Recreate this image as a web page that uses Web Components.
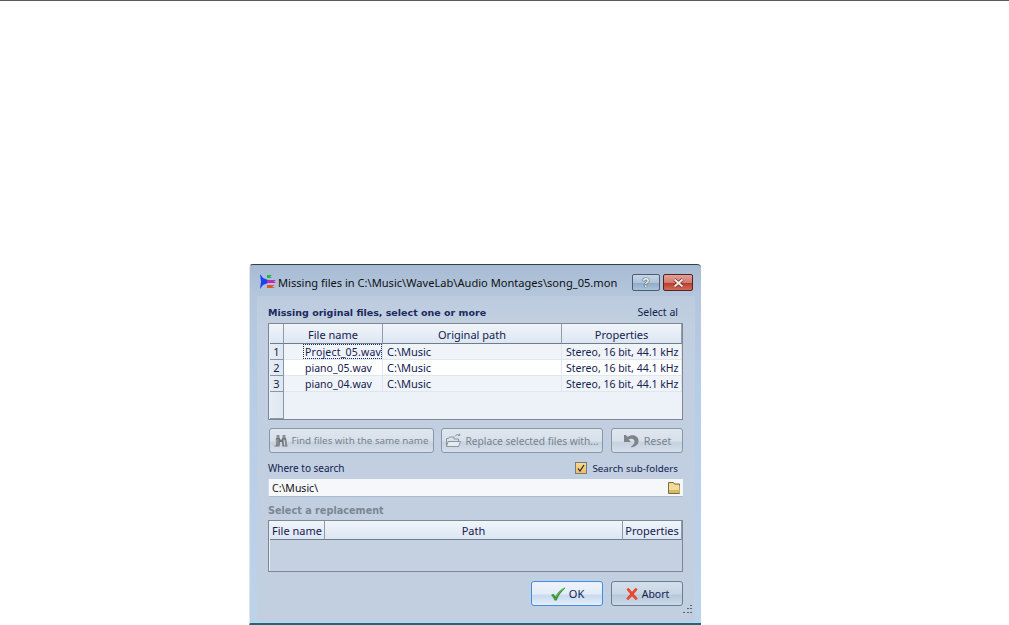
<!DOCTYPE html>
<html>
<head>
<meta charset="utf-8">
<style>
  html, body { margin: 0; background: #fff; }
  body { border-top: 1px solid #5a5a5a; font-family: "Noto Sans", "DejaVu Sans", sans-serif; height: 624px; overflow: hidden; }
</style>
</head>
<body>

<wl-dialog>
  <span slot="title">Missing files in C:\Music\WaveLab\Audio Montages\song_05.mon</span>

  <wl-section-head style="padding-top:2px">
    <wl-heading>Missing original files, select one or more</wl-heading>
    <wl-label slot="end">Select al</wl-label>
  </wl-section-head>

  <wl-grid cols="14px 99px 179px 120px" rows="20px 16px 16px 16px 1fr" style="height:95px">
    <wl-cell kind="head"></wl-cell><wl-cell kind="head" align="center">File name</wl-cell><wl-cell kind="head" align="center">Original path</wl-cell><wl-cell kind="head" align="center">Properties</wl-cell>
    <wl-cell kind="gutter">1</wl-cell><wl-cell focus indent style="font-size:10.5px;letter-spacing:.2px">Project_05.wav</wl-cell><wl-cell>C:\Music</wl-cell><wl-cell style="font-size:10.5px">Stereo, 16 bit, 44.1 kHz</wl-cell>
    <wl-cell kind="gutter">2</wl-cell><wl-cell kind="alt" indent style="font-size:10.5px">piano_05.wav</wl-cell><wl-cell kind="alt">C:\Music</wl-cell><wl-cell kind="alt" style="font-size:10.5px">Stereo, 16 bit, 44.1 kHz</wl-cell>
    <wl-cell kind="gutter">3</wl-cell><wl-cell indent style="font-size:10.5px">piano_04.wav</wl-cell><wl-cell>C:\Music</wl-cell><wl-cell style="font-size:10.5px">Stereo, 16 bit, 44.1 kHz</wl-cell>
    <wl-cell kind="gutter"></wl-cell><wl-cell kind="empty" style="grid-column:span 3"></wl-cell>
  </wl-grid>

  <wl-row style="margin-top:8px">
    <wl-button disabled style="width:165px;font-size:9.8px" icon="binoculars">Find files with the same name</wl-button>
    <wl-button disabled style="width:162px;margin-left:7px;font-size:10.2px" icon="open-folder">Replace selected files with...</wl-button>
    <wl-button disabled style="width:72px;margin-left:8px;font-size:10.6px" icon="undo">Reset</wl-button>
  </wl-row>

  <wl-section-head style="margin-top:6px;margin-bottom:2px;height:18px">
    <wl-label style="font-size:10px">Where to search</wl-label>
    <wl-check slot="end">Search sub-folders</wl-check>
  </wl-section-head>

  <wl-path-field>C:\Music\</wl-path-field>

  <wl-section-head style="margin-top:4px;margin-bottom:1px;height:18px">
    <wl-heading muted>Select a replacement</wl-heading>
  </wl-section-head>

  <wl-grid cols="55px 298px 59px" rows="19px 1fr" style="height:50px">
    <wl-cell kind="head" align="center">File name</wl-cell><wl-cell kind="head" align="center">Path</wl-cell><wl-cell kind="head" align="center">Properties</wl-cell>
    <wl-cell kind="empty-dark" style="grid-column:span 3"></wl-cell>
  </wl-grid>

  <wl-row style="margin-top:9px;justify-content:flex-end;padding-right:0">
    <wl-button default style="width:72px" icon="check">OK</wl-button>
    <wl-button style="width:72px;margin-left:8px;font-size:10.5px" icon="cross">Abort</wl-button>
  </wl-row>
</wl-dialog>

<script>
const ICONS = {
  binoculars: `<svg width="14" height="14" viewBox="0 0 14 14"><path d="M2.500 1h3v3h-3zM8.500 1h3v3h-3z" fill="#8b8f94"/><path d="M2 4h4v1.500h2V4h4l1.500 8.500h-5L8 8H6l-.5 4.500h-5z" fill="#6f7479"/><path d="M2 5.500l-.6 6M10 5.500l.6 6" stroke="#d5d9dd" stroke-width="1.200" fill="none"/><path d="M4 5v7M12 6v6" stroke="#9ea3a8" fill="none"/></svg>`,
  'open-folder': `<svg width="17" height="15" viewBox="0 0 17 15"><path d="M1.500 13.500V5.500h2l1-1.500H9v2h4.500v7.500z" fill="#d8e0e8" stroke="#8d959c"/><path d="M1.500 13.500l1.600-5h12.400l-2 5z" fill="#e6ebf0" stroke="#8d959c"/><path d="M10 3.500C11 1.500 13 1 14.800 2M14.800 .6v1.900h-1.900" fill="none" stroke="#9199a0"/></svg>`,
  undo: `<svg width="18" height="16" viewBox="0 0 18 16"><path d="M1 2v7h7L5.600 6.600C7.500 5 10.500 5.500 11.300 7.500c.8 2.200-.6 4.500-3.300 6l.5 1c4.500-.8 7.500-3.500 7-7.500C15 2.500 9 .5 4.500 3.800L2.800 2z" fill="#7e8489"/></svg>`,
  check: `<svg width="16" height="14" viewBox="0 0 16 14"><path d="M1 8l2.200-1.300L5.500 9.300C7.500 5.500 10.500 2.500 14.500 .5l.7 .8C11.500 4.500 8.500 9 6.700 13.500H4.600C3.800 11.500 2.500 9.500 1 8z" fill="#3d9a3c"/><path d="M6 10C8 6 10.500 3.300 14 1.300" stroke="#7cc46a" fill="none" stroke-width=".8"/></svg>`,
  cross: `<svg width="14" height="14" viewBox="0 0 14 14"><path d="M1.500 2.500l1.800-1.700L7 4.800 10.800 .8l1.800 1.700L8.800 7l4 4.500-1.900 1.800L7 9.200l-3.900 4.100-1.900-1.800L5.200 7z" fill="#e8492a"/></svg>`
}

class WlDialog extends HTMLElement {
  constructor(){
    super()
    this.attachShadow({mode: 'open'}).innerHTML = `
    <style>
      :host { display: block; width: 452px; height: 361px; margin: 263px 0 0 249px; box-sizing: border-box; position: relative;
        background: linear-gradient(180deg, #a7bbd3 0, #b3c6dc 30px, #b6cde6 120px, #bcd3ea 100%);
        border-top: 1px solid #3a3f45; border-bottom: 2px solid #1f6a78; border-left: 1px solid #dfe6ee; border-radius: 4px 4px 0 0; }
      header { height: 31px; display: flex; align-items: flex-start; padding: 9px 8px 0 9px; font-size: 11.1px; color: #111; box-sizing: border-box; }
      header > svg { margin-right: 1px; flex: none; }
      header .text { flex: 1; white-space: nowrap; min-width: 0; padding-top: 1px; }
      .cap { flex: none; width: 28px; height: 17px; box-sizing: border-box; border: 1px solid #4c5d70; border-radius: 2px; display: flex; align-items: center; justify-content: center;
        background: linear-gradient(180deg, #c5d5e6 0, #b0c4da 50%, #8eaac6 52%, #a9c3dc 100%); color: #f2f5f8; font: bold 12px "Liberation Sans", sans-serif; text-shadow: 0 0 1px #1f2a36, 0 0 1px #1f2a36; }
      .close { width: 30px; margin-left: 3px; border-color: #5a1f20; background: linear-gradient(180deg, #e2a198 0, #d27b6e 50%, #b93a2c 52%, #cf6d5a 100%); }
      main { margin: 0 6px 0 7px; padding: 3px 12px 0 11px; height: 322px; font-size: 11px; color: #13214f;
        background: linear-gradient(180deg, #bccbde 0, #c1cfe0 30px, #c1cfe0 100%); }
      .grip { position: absolute; right: 8px; bottom: 8px; }
    </style>
    <header>
      <svg width="18" height="16" viewBox="0 0 18 16">
        <path d="M1 0l3 4 5 2v3l-5 2-3 4 1-7.500z" fill="#1c3ff0"/>
        <path d="M8 1h5l-2 1.500 2 1.500H8z" fill="#27b84f"/>
        <path d="M8 6h9l-2 1.500 2 1.500H8z" fill="#c02bb5"/>
        <path d="M8 11h8l-3 1.500 3 1.500H8z" fill="#e0562a"/>
      </svg>
      <span class="text"><slot name="title"></slot></span>
      <span class="cap">?</span>
      <span class="cap close"><svg width="13" height="10" viewBox="0 0 13 10"><path d="M2.500 1.500l8 7M10.500 1.500l-8 7" stroke="#6d2a22" stroke-width="3.400" fill="none"/><path d="M2.500 1.500l8 7M10.500 1.500l-8 7" stroke="#f3e9e6" stroke-width="2" fill="none"/></svg></span>
    </header>
    <main><slot></slot></main>
    <svg class="grip" width="11" height="10" viewBox="0 0 11 10" fill="#59636f">
      <rect x="8" y="0" width="2" height="1"/><rect x="5" y="3" width="2" height="1"/><rect x="8" y="3" width="2" height="1"/>
      <rect x="1" y="7" width="2" height="1"/><rect x="5" y="7" width="2" height="1"/><rect x="8" y="7" width="2" height="1"/>
    </svg>`
  }
}

class WlSectionHead extends HTMLElement {
  constructor(){
    super()
    this.attachShadow({mode: 'open'}).innerHTML = `
    <style>
      :host { display: flex; align-items: center; justify-content: space-between; box-sizing: border-box; height: 24px; white-space: nowrap; }
      .end { padding-right: 5px; }
    </style>
    <slot></slot><span class="end"><slot name="end"></slot></span>`
  }
}

class WlHeading extends HTMLElement {
  constructor(){
    super()
    this.attachShadow({mode: 'open'}).innerHTML = `
    <style>
      :host { display: block; font: bold 9.5px "DejaVu Sans", sans-serif; color: #1b2a5e; }
      :host([muted]) { color: #7c8694; font-size: 9.7px; }
    </style><slot></slot>`
  }
}

class WlLabel extends HTMLElement {
  constructor(){
    super()
    this.attachShadow({mode: 'open'}).innerHTML = `
    <style>:host { display: block; font-size: 10.5px; color: #13214f; }</style><slot></slot>`
  }
}

class WlGrid extends HTMLElement {
  constructor(){
    super()
    this.attachShadow({mode: 'open'}).innerHTML = `
    <style>
      :host { display: block; box-sizing: content-box; border: 1px solid #7d8894; width: 413px; background: #edf2f8; }
      .grid { display: grid; height: 100%; grid-template-columns: ${this.getAttribute('cols')}; grid-template-rows: ${this.getAttribute('rows')}; border-left: 1px solid #e8eef5; box-shadow: inset 0 1px #f4f7fb; }
    </style>
    <div class="grid"><slot></slot></div>`
  }
}

class WlCell extends HTMLElement {
  constructor(){
    super()
    this.attachShadow({mode: 'open'}).innerHTML = `
    <style>
      :host { display: flex; align-items: center; box-sizing: border-box; overflow: hidden; white-space: nowrap; font-size: 11px; color: #13214f; padding: 0 0 0 4px; min-width: 0;
        background: #f0f4f9; border-bottom: 1px solid #dde6f1; border-right: 1px solid #dde6f1; }
      .txt { display: flex; align-items: center; height: 100%; }
      :host([indent]) { padding-left: 19px; }
      :host([indent]) .txt { flex: 1; padding-left: 2px; }
      :host([focus]) .txt { outline: 1px dotted #1b2a5e; outline-offset: -1px; }
      :host([align=center]) { justify-content: center; padding: 0; }
      :host([kind=alt]) { background: #fff; }
      :host([kind=head]) { background: linear-gradient(180deg, #f1f5fa 0, #dce6f2 100%); border-bottom: 1px solid #6d7d90; border-right: 1px solid #8e9cab; padding-top: 1px; }
      :host([kind=gutter]) { justify-content: center; padding: 0; background: linear-gradient(90deg, #e7edf4, #dfe7f1); border-right: 1px solid #8796a8; border-bottom: 1px solid #8796a8; }
      :host([kind=empty]) { background: #edf2f8; border: 0; }
      :host([kind=empty-dark]) { background: #c5d1e0; border: 0; }
    </style><span class="txt"><slot></slot></span>`
  }
}

class WlRow extends HTMLElement {
  constructor(){
    super()
    this.attachShadow({mode: 'open'}).innerHTML = `
    <style>:host { display: flex; padding-left: 1px; }</style><slot></slot>`
  }
}

class WlButton extends HTMLElement {
  constructor(){
    super()
    const icon = ICONS[this.getAttribute('icon')] || ''
    this.attachShadow({mode: 'open'}).innerHTML = `
    <style>
      :host { display: flex; align-items: center; justify-content: center; gap: 3px; height: 25px; box-sizing: border-box; white-space: nowrap; font-size: 11px; color: #13214f;
        border: 1px solid #6a7d96; border-radius: 3px; background: linear-gradient(180deg, #d5dfea 0, #c9d6e5 50%, #b9c9dc 58%, #cbd8e7 100%); }
      :host([disabled]) { color: #78828f; border-color: #8797aa; background: linear-gradient(180deg, #dfe6ee 0, #d8e0ea 50%, #c6d2e0 60%, #d6dfe9 100%); }
      :host([default]) { border-color: #3f8fe6; background: linear-gradient(180deg, #edf3fb 0, #e3ecf8 50%, #c8d9ef 60%, #e6effa 100%); }
      svg { display: block; flex: none; }
    </style>${icon}<span><slot></slot></span>`
  }
}

class WlCheck extends HTMLElement {
  constructor(){
    super()
    this.attachShadow({mode: 'open'}).innerHTML = `
    <style>
      :host { display: flex; align-items: center; gap: 5px; font-size: 9.8px; color: #13214f; }
      .box { width: 12px; height: 12px; box-sizing: border-box; border: 1px solid #6a7d96; background: linear-gradient(180deg, #fbd98c, #f3bd52); display: block; }
    </style>
    <svg class="box" viewBox="0 0 10 10"><path d="M2 5.500L4 8 8 2" fill="none" stroke="#16224d" stroke-width="1.200"/></svg>
    <span><slot></slot></span>`
  }
}

class WlPathField extends HTMLElement {
  constructor(){
    super()
    this.attachShadow({mode: 'open'}).innerHTML = `
    <style>
      :host { display: flex; align-items: center; justify-content: space-between; height: 18px; width: 415px; box-sizing: border-box; padding: 0 2px 0 3px; font-size: 10.5px; color: #111;
        background: #f6f7fb; border-left: 1px solid #cfdbe8; border-bottom: 1px solid #aabbd0; }
    </style>
    <span><slot></slot></span>
    <svg width="14" height="13" viewBox="0 0 14 13">
      <path d="M1.500 12.500V1.500h5l1 1.500h5v9.500z" fill="#f0d98e" stroke="#77694a"/>
      <path d="M2 4.500h10.500v7.500H2z" fill="#f1dc9a"/><path d="M2 9h10.500v3H2z" fill="#dcb95f"/>
    </svg>`
  }
}

customElements.define('wl-dialog', WlDialog)
customElements.define('wl-section-head', WlSectionHead)
customElements.define('wl-heading', WlHeading)
customElements.define('wl-label', WlLabel)
customElements.define('wl-grid', WlGrid)
customElements.define('wl-cell', WlCell)
customElements.define('wl-row', WlRow)
customElements.define('wl-button', WlButton)
customElements.define('wl-check', WlCheck)
customElements.define('wl-path-field', WlPathField)
</script>
</body>
</html>
